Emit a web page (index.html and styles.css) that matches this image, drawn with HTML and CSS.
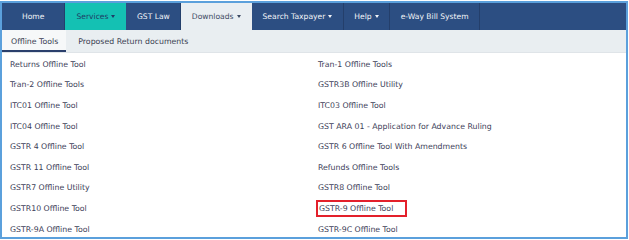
FILE: index.html
```html
<!DOCTYPE html>
<html>
<head>
<meta charset="utf-8">
<link rel="stylesheet" href="styles.css">
</head>
<body>
<div class="frame">
  <nav class="nav">
    <a class="nav-item home">Home</a>
    <a class="nav-item services">Services <span class="caret"></span></a>
    <a class="nav-item">GST Law</a>
    <a class="nav-item downloads">Downloads <span class="caret"></span></a>
    <a class="nav-item">Search Taxpayer <span class="caret"></span></a>
    <a class="nav-item">Help <span class="caret"></span></a>
    <a class="nav-item">e-Way Bill System</a>
  </nav>
  <div class="subbar">
    <a class="tab active">Offline Tools</a>
    <a class="tab">Proposed Return documents</a>
  </div>
  <div class="list">
    <a class="link">Returns Offline Tool</a>
    <a class="link">Tran-1 Offline Tools</a>
    <a class="link">Tran-2 Offline Tools</a>
    <a class="link">GSTR3B Offline Utility</a>
    <a class="link">ITC01 Offline Tool</a>
    <a class="link">ITC03 Offline Tool</a>
    <a class="link">ITC04 Offline Tool</a>
    <a class="link">GST ARA 01 - Application for Advance Ruling</a>
    <a class="link">GSTR 4 Offline Tool</a>
    <a class="link">GSTR 6 Offline Tool With Amendments</a>
    <a class="link">GSTR 11 Offline Tool</a>
    <a class="link">Refunds Offline Tools</a>
    <a class="link">GSTR7 Offline Utility</a>
    <a class="link">GSTR8 Offline Tool</a>
    <a class="link">GSTR10 Offline Tool</a>
    <a class="link"><span class="hl">GSTR-9 Offline Tool</span></a>
    <a class="link">GSTR-9A Offline Tool</a>
    <a class="link">GSTR-9C Offline Tool</a>
  </div>
</div>
</body>
</html>
```
FILE: styles.css
```css
html, body {
  margin: 0;
  padding: 0;
  background: #ffffff;
}
body {
  font-family: "DejaVu Sans", Verdana, sans-serif;
  font-size: 7.8px;
}
.frame {
  box-sizing: border-box;
  width: 628px;
  height: 238px;
  margin-top: 1px;
  border: 2px solid #5ba0dc;
  overflow: hidden;
  background: #fff;
}
.nav {
  display: flex;
  height: 27px;
  background: #2c4e82;
  font-size: 7.6px;
}
.nav-item {
  display: flex;
  align-items: center;
  padding: 0 10.5px;
  color: #f2f4f8;
  border-right: 1px solid #243f6b;
  white-space: nowrap;
}
.nav-item.home {
  padding: 0 20px;
}
.nav-item.services {
  background: #14c1b3;
  color: #1f3c66;
  padding: 0 10px 0 11px;
  border-right-color: #14c1b3;
}
.nav-item.downloads {
  background: #e9eef2;
  color: #3c4a63;
  border-right-color: #e9eef2;
}
.caret {
  display: inline-block;
  width: 0;
  height: 0;
  margin-left: 3px;
  border-left: 2.5px solid transparent;
  border-right: 2.5px solid transparent;
  border-top: 3px solid currentColor;
}
.subbar {
  display: flex;
  height: 23px;
  background: #e9eef1;
  box-sizing: border-box;
  border-bottom: 1px solid #dfe4e8;
}
.tab {
  display: flex;
  align-items: center;
  padding: 0 12px;
  color: #3a3f52;
  white-space: nowrap;
}
.tab.active {
  background: #f6f8f9;
  padding: 0 8px 0 9px;
  box-shadow: inset 0 -2px 0 #2a3f6c;
}
.list {
  display: grid;
  grid-template-columns: 308px 1fr;
  grid-auto-rows: 20.6px;
  padding: 1px 0 0 8px;
}
.link {
  display: flex;
  align-items: center;
  color: #3d4159;
  white-space: nowrap;
}
.hl {
  display: inline-block;
  box-sizing: border-box;
  height: 17px;
  line-height: 13px;
  border: 2px solid #e3202b;
  padding: 0 12px 0 1px;
  margin-left: -2px;
}
```
